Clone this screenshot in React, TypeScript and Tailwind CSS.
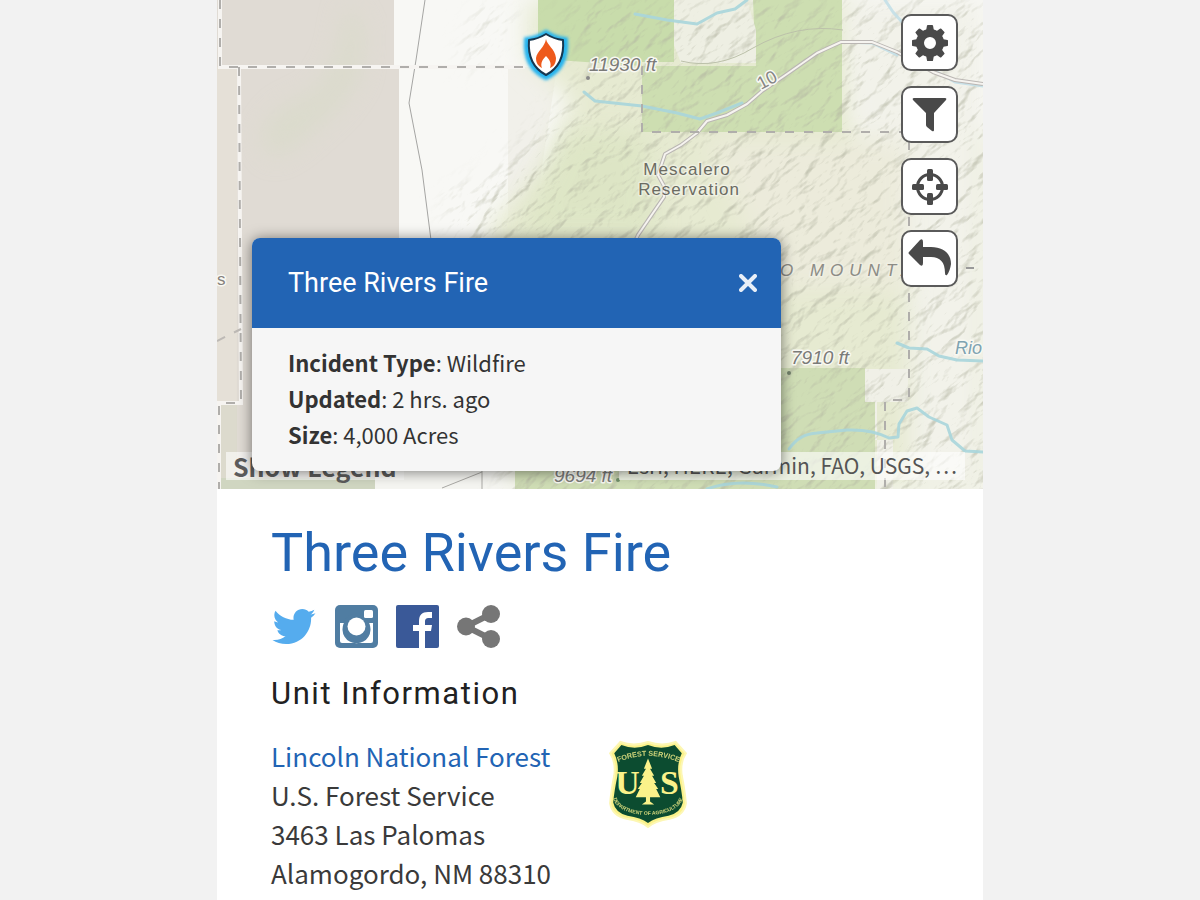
import type { ReactNode } from 'react';
import { FaTwitter } from 'react-icons/fa';

// ============================================
// INCIDENT PAGE
// Map with incident popup, followed by unit details
// ============================================

const BODY_FONT = "font-['Noto_Sans_CJK_SC','Noto_Sans',sans-serif]";
const HEADING_FONT = 'font-[Roboto,sans-serif]';

// ---------- Map ----------

const Basemap = () => (
  <svg
    className="absolute inset-0 h-full w-full"
    viewBox="0 0 766 489"
    preserveAspectRatio="xMidYMid slice"
    aria-hidden="true"
  >
    <defs>
      <filter id="hillshade" x="0" y="0" width="100%" height="100%">
        <feTurbulence type="fractalNoise" baseFrequency="0.035 0.08" numOctaves="5" seed="12" />
        <feDiffuseLighting surfaceScale="5" diffuseConstant="1" lightingColor="#fff">
          <feDistantLight azimuth="245" elevation="55" />
        </feDiffuseLighting>
        <feColorMatrix values="0 0 0 0 0.45  0 0 0 0 0.46  0 0 0 0 0.36  -1.3 0 0 0 0.98" />
      </filter>
      <filter id="soft" x="-20%" y="-20%" width="140%" height="140%">
        <feGaussianBlur stdDeviation="12" />
      </filter>
      <mask id="terrain">
        <g filter="url(#soft)" fill="#fff">
          <path d="M340 0H790V510H290L250 225L300 150L370 70Z" opacity="0.75" />
          <path d="M270 0L300 20L270 60L245 70L250 30Z" opacity="0.5" />
          <path d="M230 190L320 160V240H230Z" opacity="0.5" />
        </g>
      </mask>
    </defs>

    {/* Land cover */}
    <rect width="766" height="489" fill="#f8f8f5" />
    <path d="M0 0H177V67H182V489H0Z" fill="#e0dbd4" />
    <path d="M0 67H20V403H0Z" fill="#e5e0d7" />
    <path d="M0 403H20V489H0Z" fill="#dcdacd" />
    <path d="M0 478H158V489H0Z" fill="#d0d6c1" />
    <path d="M158 240H300V489H158Z" fill="#f5f5f1" />
    <path
      d="M130 0L148 30L142 80L120 110L80 145L55 160L42 135L60 110L100 90L120 55Z"
      fill="#d6dbc5"
      opacity="0.5"
      filter="url(#soft)"
    />
    <path d="M291 67H340L320 200L291 240Z" fill="#f1f0ea" />
    <path
      d="M310 0H640V132H766V489H300L270 230L330 160L355 100L310 60Z"
      fill="#e6ead1"
      filter="url(#soft)"
    />
    <path d="M626 0H766V489H692V300L640 140Z" fill="#f2f2ea" filter="url(#soft)" />
    <path d="M490 140H690V290H560Z" fill="#ecebdb" filter="url(#soft)" />
    <path d="M350 130L430 135L440 235H300Z" fill="#dae4c1" opacity="0.7" filter="url(#soft)" />
    <path d="M321 0H457V62H425V66L340 60L321 35Z" fill="#c8dcab" />
    <path d="M536 0H625V132H425V66H539Z" fill="#cddeb1" />
    <path d="M457 0H530L539 30V63H464L457 45Z" fill="#eeefe3" />
    <path d="M563 368H648V402H658V489H298V465H563Z" fill="#cfddb5" />
    <path d="M648 369H691V402H658V440H676V489H660V402H648Z" fill="#f0f0e7" />

    <g mask="url(#terrain)">
      <g transform="rotate(-38 383 244)">
        <rect x="-200" y="-300" width="1200" height="1100" filter="url(#hillshade)" />
      </g>
    </g>

    {/* Rivers */}
    <g
      fill="none"
      stroke="#a9d6dc"
      strokeWidth="3"
      strokeLinecap="round"
      strokeLinejoin="round"
      opacity="0.9"
    >
      <path d="M418 14L450 20L480 24L500 13L518 9L530 0" />
      <path d="M367 92L378 101L425 106L460 113L483 119L500 113L525 103" />
      <path d="M572 449Q582 434 600 433L630 430Q655 429 672 438L681 437L682 424L690 411L700 408L712 417L730 425L735 440L748 451L766 452" />
      <path d="M680 343L692 348L710 349L722 356L740 360L766 361" />
      <path d="M490 489Q520 478 560 487" />
      <path d="M668 0L676 12L695 33L716 70L738 82L766 86" stroke="#c4e0e8" />
      <path d="M625 42L655 43L680 55" stroke="#c4e0e8" />
    </g>

    {/* Roads */}
    <g fill="none" strokeLinejoin="round">
      <path
        d="M412 255L421 235L436 213L447 197V186L441 175L448 154L464 145L480 133L490 121L510 115L530 104L545 91L570 74L600 53L624 42L655 42L680 52L716 72L738 80L766 84"
        stroke="#bab6b3"
        strokeWidth="4"
      />
      <path
        d="M412 255L421 235L436 213L447 197V186L441 175L448 154L464 145L480 133L490 121L510 115L530 104L545 91L570 74L600 53L624 42L655 42L680 52L716 72L738 80L766 84"
        stroke="#f6f4f0"
        strokeWidth="2"
      />
      <path d="M208 0L199 60L192 103L205 170L214 240" stroke="#a5a5a3" strokeWidth="1" />
      <path d="M464 61Q500 70 536 48Q580 23 626 30" stroke="#bcc1aa" strokeWidth="1" />
      <path d="M225 488L265 472M265 489V470" stroke="#aaa9a5" strokeWidth="1" />
    </g>

    {/* Administrative boundaries */}
    <g fill="none" stroke="#f6f4f1" strokeWidth="4">
      <path d="M3 0V67H308M22 67L24 403H2V489" />
    </g>
    <g fill="none" stroke="#b0aeab" strokeWidth="2" strokeDasharray="9 10">
      <path d="M3 0V67H308" />
      <path d="M22 67L24 403H2V489" />
      <path d="M0 341L24 329" stroke="#bdb9b5" />
      <path d="M425 66V132H692V400H668V489" />
    </g>

    {/* Labels */}
    <g
      fontFamily="'Liberation Sans', sans-serif"
      stroke="#f8f8f2"
      strokeWidth="3"
      strokeLinejoin="round"
      paintOrder="stroke"
    >
      <g fill="#7b7b78" fontSize="19" fontStyle="italic">
        <text x="372" y="71">11930 ft</text>
        <text x="574" y="364">7910 ft</text>
        <text x="337" y="482">9694 ft</text>
      </g>
      <text x="544" y="90" fill="#858585" fontSize="18" transform="rotate(-28 544 90)">10</text>
      <g fill="#6b6b62" fontSize="17" letterSpacing="1" textAnchor="middle" strokeOpacity="0.5">
        <text x="470" y="175">Mescalero</text>
        <text x="472" y="195">Reservation</text>
      </g>
      <g fill="#8c8c86" fontSize="17" fontStyle="italic" letterSpacing="6" strokeOpacity="0.4">
        <text x="563" y="276">O MOUNTA</text>
      </g>
      <text x="738" y="354" fill="#7fa3b1" fontSize="18" fontStyle="italic">Rio</text>
      <text x="0" y="285" fill="#85817d" fontSize="17">s</text>
    </g>
    <circle cx="371" cy="78" r="2" fill="#888" />
    <circle cx="572" cy="373" r="2" fill="#71806a" />
    <circle cx="401" cy="480" r="2" fill="#71906a" />
    <path d="M749 268H757" stroke="#999" strokeWidth="2" />
  </svg>
);

const FireMarker = () => (
  <svg className="h-[58px] w-[52px]" viewBox="0 0 52 58" aria-hidden="true">
    <defs>
      <filter id="glow" x="-30%" y="-30%" width="160%" height="160%">
        <feGaussianBlur stdDeviation="1.6" />
      </filter>
    </defs>
    <path
      d="M26 7Q17 13 7 14Q5 41 26 51Q47 41 45 14Q35 13 26 7Z"
      fill="#28b4ee"
      stroke="#28b4ee"
      strokeWidth="6"
      filter="url(#glow)"
    />
    <path
      d="M26 8Q18 13 9 14Q7 39 26 49Q45 39 43 14Q34 13 26 8Z"
      fill="#fff"
      stroke="#163750"
      strokeWidth="2"
      strokeLinejoin="round"
    />
    <path
      d="M26 13C27 19 35 23 36 32C36 38 33 41 30 42C32 37 29 33 26 30C23 33 20 37 22 42C18 40 16 37 16 32C17 25 25 21 26 13Z"
      fill="#ee5a1c"
    />
  </svg>
);

interface MapButtonProps {
  label: string;
  children: ReactNode;
}

const MapButton = ({ label, children }: MapButtonProps) => (
  <button
    type="button"
    aria-label={label}
    className="flex size-[57px] items-center justify-center rounded-[10px] border-2 border-[#5a5a5a] bg-white text-[#494949]"
  >
    {children}
  </button>
);

const toothAngles = [0, 45, 90, 135, 180, 225, 270, 315];
const crossAngles = [0, 90, 180, 270];

const MapControls = () => (
  <div className="absolute top-[14px] right-[25px] flex flex-col gap-[15px]">
    <MapButton label="Settings">
      <svg className="size-[38px]" viewBox="0 0 38 38" fill="currentColor">
        <path
          fillRule="evenodd"
          d="M19 5A14 14 0 1 0 19 33A14 14 0 1 0 19 5ZM19 13A6 6 0 1 1 19 25A6 6 0 1 1 19 13Z"
        />
        {toothAngles.map((angle) => (
          <path
            key={angle}
            d="M15 7L16 1.5Q16 1 17 1H21Q22 1 22 1.5L23 7Z"
            transform={`rotate(${angle} 19 19)`}
          />
        ))}
      </svg>
    </MapButton>
    <MapButton label="Filter">
      <svg className="size-[38px]" viewBox="0 0 38 38" fill="currentColor">
        <path d="M3 2H34Q36 2 35 4L23 17V34Q23 36 21 35L16 31Q15 30 15 29V17L2 4Q1 2 3 2Z" />
      </svg>
    </MapButton>
    <MapButton label="Locate me">
      <svg className="size-[38px]" viewBox="0 0 38 38" fill="currentColor">
        <circle cx="19" cy="19" r="12.5" fill="none" stroke="currentColor" strokeWidth="3" />
        {crossAngles.map((angle) => (
          <rect
            key={angle}
            x="16"
            y="1"
            width="6"
            height="12"
            rx="1.5"
            transform={`rotate(${angle} 19 19)`}
          />
        ))}
      </svg>
    </MapButton>
    <MapButton label="Back to previous view">
      <svg className="h-[42px] w-[46px]" viewBox="0 0 46 42" fill="currentColor">
        <path d="M2 14L13 2Q16 0 16 4V9H24C37 9 44 16 44 26Q43 33 40 37Q38 38 38 35C38 24 33 19 24 19H16V25Q16 29 13 27L2 16Q1 15 2 14Z" />
      </svg>
    </MapButton>
  </div>
);

const incidentDetails = [
  { label: 'Incident Type', value: 'Wildfire' },
  { label: 'Updated', value: '2 hrs. ago' },
  { label: 'Size', value: '4,000 Acres' },
];

const IncidentPopup = () => (
  <div className="absolute top-[238px] right-[202px] left-[35px] overflow-hidden rounded-lg bg-[#f6f6f6] shadow-[0_1px_14px_rgba(0,0,0,0.5)]">
    <div className="flex h-[90px] items-center justify-between bg-[#2264b4] pr-5 pl-9 text-white">
      <h2 className={`${HEADING_FONT} text-[27px] leading-9`}>Three Rivers Fire</h2>
      <button type="button" aria-label="Close" className="flex size-[26px] items-center justify-center">
        <svg className="size-[18px]" viewBox="0 0 18 18" stroke="#e8eff8" strokeWidth="4" strokeLinecap="round">
          <path d="M2 2L16 16M16 2L2 16" />
        </svg>
      </button>
    </div>
    <div className="px-9 pt-4 pb-[19px] text-[22px] leading-9 text-[#333]">
      {incidentDetails.map(({ label, value }) => (
        <p key={label}>
          <strong className="font-bold">{label}</strong>: {value}
        </p>
      ))}
    </div>
  </div>
);

const IncidentMap = () => (
  <section aria-label="Incident map" className="relative h-[489px] overflow-hidden">
    <Basemap />
    <button
      type="button"
      className="absolute bottom-[9px] left-[9px] h-7 bg-white/60 px-[7px] text-[25px] leading-[26px] font-bold text-[#5c5c5c]"
    >
      Show Legend
    </button>
    <p className="absolute right-[18px] bottom-[9px] h-7 bg-white/60 px-2 text-[21px] leading-[26px] text-[#555]">
      Esri, HERE, Garmin, FAO, USGS, …
    </p>
    <div className="absolute top-[26px] left-[303px]">
      <FireMarker />
    </div>
    <MapControls />
    <IncidentPopup />
  </section>
);

// ---------- Social links ----------

const InstagramIcon = () => (
  <svg className="size-[43px]" viewBox="0 0 43 43">
    <rect width="43" height="43" rx="5" fill="#507da2" />
    <path d="M5 18H9A14 14 0 1 0 34 18H38V36Q38 38 36 38H7Q5 38 5 36Z" fill="#fff" />
    <circle cx="21.5" cy="21.5" r="13" fill="#507da2" />
    <circle cx="21.5" cy="21.5" r="9" fill="#fff" />
    <rect x="29" y="5" width="9" height="8" rx="1.5" fill="#fff" />
  </svg>
);

const FacebookIcon = () => (
  <svg className="size-[43px]" viewBox="0 0 43 43">
    <rect width="43" height="43" rx="2" fill="#3a5998" />
    <path
      d="M23 43V26H17V20H23V16C23 10 26 7 32 7H36V13H33C30 13 29 14 29 17V20H36L35 26H29V43Z"
      fill="#fff"
    />
  </svg>
);

const ShareIcon = () => (
  <svg className="size-[43px]" viewBox="0 0 43 43" fill="#767676">
    <path d="M34 9L9 21.5L34 34" fill="none" stroke="#767676" strokeWidth="6" />
    <circle cx="9" cy="21.5" r="9" />
    <circle cx="34" cy="9" r="9" />
    <circle cx="34" cy="34" r="9" />
  </svg>
);

const SocialLinks = () => (
  <div className="mt-[22px] flex gap-[18px]">
    <a href="#twitter" aria-label="Twitter">
      <FaTwitter className="h-[43px] w-[46px] text-[#55acee]" />
    </a>
    <a href="#instagram" aria-label="Instagram">
      <InstagramIcon />
    </a>
    <a href="#facebook" aria-label="Facebook">
      <FacebookIcon />
    </a>
    <a href="#share" aria-label="Share">
      <ShareIcon />
    </a>
  </div>
);

// ---------- Unit information ----------

const ForestServiceBadge = () => (
  <svg
    className="mt-1 h-[88px] w-[80px]"
    viewBox="0 0 78 86"
    role="img"
    aria-label="U.S. Forest Service"
  >
    <defs>
      <path id="badge-top" d="M9 22Q39 9 70 22" />
      <path id="badge-bottom" d="M5 56C8 79 70 79 73 56" />
    </defs>
    <path
      d="M12 2Q25 7 39 2Q53 7 66 2L76 13Q70 22 72 35Q75 50 76 62Q74 74 60 77Q46 79 39 85Q32 79 18 77Q4 74 2 62Q3 50 6 35Q8 22 2 13Z"
      fill="#fbf28a"
      stroke="#fdf7b4"
      strokeWidth="2"
    />
    <path
      d="M13 5Q26 10 39 5Q52 10 65 5L72 13Q67 23 69 36Q72 50 73 61Q71 71 59 74Q46 76 39 81Q32 76 19 74Q7 71 5 61Q6 50 9 36Q11 23 6 13Z"
      fill="#0c4c30"
    />
    <path
      d="M39 18L35 28H37L33 35H35L31 42H33L29 48H31L27 56H37V60L33 63H45L41 60V56H51L47 48H49L45 42H47L43 35H45L41 28H43Z"
      fill="#fbf28a"
    />
    <g fill="#fbf28a" textAnchor="middle">
      <g fontFamily="'Liberation Serif', serif" fontSize="33" fontWeight="bold">
        <text x="19" y="53">U</text>
        <text x="60" y="53">S</text>
      </g>
      <g fontFamily="'Liberation Sans', sans-serif" fontWeight="bold" opacity="0.8">
        <text fontSize="7">
          <textPath href="#badge-top" startOffset="50%">FOREST SERVICE</textPath>
        </text>
        <text fontSize="5">
          <textPath href="#badge-bottom" startOffset="50%">DEPARTMENT OF AGRICULTURE</textPath>
        </text>
      </g>
    </g>
  </svg>
);

const UnitInformation = () => (
  <section>
    <h2
      className={`${HEADING_FONT} mt-7 text-[31px] leading-9 font-normal tracking-wider text-[#212121]`}
    >
      Unit Information
    </h2>
    <div className="mt-6 flex items-start gap-[57px]">
      <address className="text-[26px] leading-[39px] text-[#3a3a3a] not-italic">
        <a href="#lincoln-national-forest" className="text-[#2264b4]">
          Lincoln National Forest
        </a>
        <br />
        U.S. Forest Service
        <br />
        3463 Las Palomas
        <br />
        Alamogordo, NM 88310
      </address>
      <ForestServiceBadge />
    </div>
  </section>
);

export default function App() {
  return (
    <div className={`min-h-screen bg-[#f2f2f2] ${BODY_FONT}`}>
      <main className="mx-auto min-h-screen w-full max-w-[766px] bg-white">
        <IncidentMap />
        <div className="px-[54px] pt-[34px]">
          <h1 className={`${HEADING_FONT} text-[54px] leading-[60px] text-[#2264b4]`}>
            Three Rivers Fire
          </h1>
          <SocialLinks />
          <UnitInformation />
        </div>
      </main>
    </div>
  );
}
